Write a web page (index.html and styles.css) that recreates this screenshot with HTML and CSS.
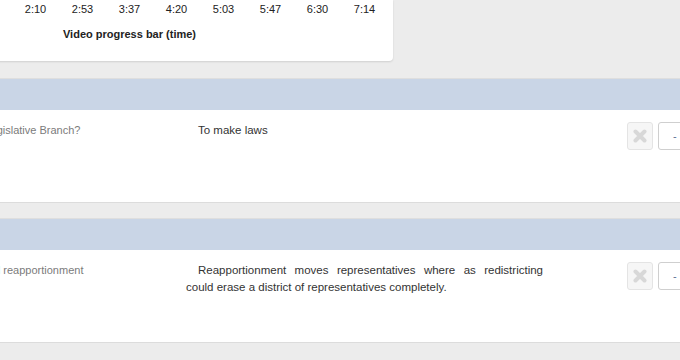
FILE: index.html
```html
<!DOCTYPE html>
<html lang="en">
<head>
  <meta charset="UTF-8">
  <title>Review cards</title>
  <link rel="stylesheet" href="styles.css">
</head>
<body>
  <div class="page">
    <!-- timeline -->
    <div class="timeline-card">
      <div class="ticks">
        <span>2:10</span><span>2:53</span><span>3:37</span><span>4:20</span>
        <span>5:03</span><span>5:47</span><span>6:30</span><span>7:14</span>
      </div>
      <div class="caption">Video progress bar (time)</div>
    </div>

    <!-- card 1 -->
    <div class="card">
      <div class="card-head"></div>
      <div class="card-body">
        <div class="question">What is the job of the Legislative Branch?</div>
        <div class="answer">To make laws</div>
        <div class="actions">
          <button class="btn-remove" type="button">
            <svg width="14" height="14" viewBox="0 0 14 14"><path d="M2.5 2.5 L11.5 11.5 M11.5 2.5 L2.5 11.5" stroke="#d8d8d8" stroke-width="4" stroke-linecap="round"/></svg>
          </button>
          <button class="btn-more" type="button">-</button>
        </div>
      </div>
    </div>

    <!-- card 2 -->
    <div class="card">
      <div class="card-head"></div>
      <div class="card-body">
        <div class="question">Contrast redistricting and reapportionment</div>
        <div class="answer">Reapportionment moves representatives where as redistricting could erase a district of representatives completely.</div>
        <div class="actions">
          <button class="btn-remove" type="button">
            <svg width="14" height="14" viewBox="0 0 14 14"><path d="M2.5 2.5 L11.5 11.5 M11.5 2.5 L2.5 11.5" stroke="#d8d8d8" stroke-width="4" stroke-linecap="round"/></svg>
          </button>
          <button class="btn-more" type="button">-</button>
        </div>
      </div>
    </div>
  </div>
</body>
</html>
```

FILE: styles.css
```css
/* Reset */
* {
  margin: 0;
  padding: 0;
  box-sizing: border-box;
}

body {
  font-family: "Liberation Sans", Arial, Helvetica, sans-serif;
  font-size: 11px;
  color: #333;
  background-color: #ececec;
  overflow: hidden;
}

/* page is scrolled a bit to the right */
.page {
  margin-left: -134px;
  width: 1000px;
}

/* Timeline card */
.timeline-card {
  width: 527px;
  height: 61px;
  padding: 1px 5px 0;
  background-color: #fff;
  border-bottom-right-radius: 4px;
  box-shadow: 0 1px 2px rgba(0, 0, 0, 0.12);
}

.ticks {
  display: flex;
  padding-left: 141px;
}

.ticks span {
  width: 47px;
  text-align: center;
  line-height: 16px;
  color: #222;
}

.caption {
  margin-top: 9px;
  line-height: 16px;
  text-align: center;
  font-weight: bold;
  color: #222;
}

/* Question cards */
.card {
  margin-top: 15px;
  border-top: 1px solid #dedede;
  border-bottom: 1px solid #dcdcdc;
}

.timeline-card + .card {
  margin-top: 17px;
}

.card-head {
  height: 31px;
  background-color: #c9d5e6;
}

.card-body {
  display: flex;
  align-items: flex-start;
  height: 92px;
  padding: 12px 0 0 12px;
  background-color: #fff;
}

.question {
  width: 308px;
  line-height: 16px;
  color: #7b7b7b;
  white-space: nowrap;
}

.answer {
  width: 357px;
  font-size: 11.5px;
  line-height: 16.5px;
  text-align: justify;
  text-indent: 12px;
  color: #333;
}

.actions {
  display: flex;
  margin-left: 84px;
}

.btn-remove {
  width: 26px;
  height: 28px;
  display: flex;
  align-items: center;
  justify-content: center;
  background-color: #f6f6f6;
  border: 1px solid #e4e4e4;
  border-radius: 3px;
}

.btn-more {
  width: 40px;
  height: 28px;
  margin-left: 5px;
  padding-left: 14px;
  text-align: left;
  font-family: inherit;
  font-size: 11px;
  color: #5a6f94;
  background-color: #fff;
  border: 1px solid #cfcfcf;
  border-radius: 3px;
}
```
